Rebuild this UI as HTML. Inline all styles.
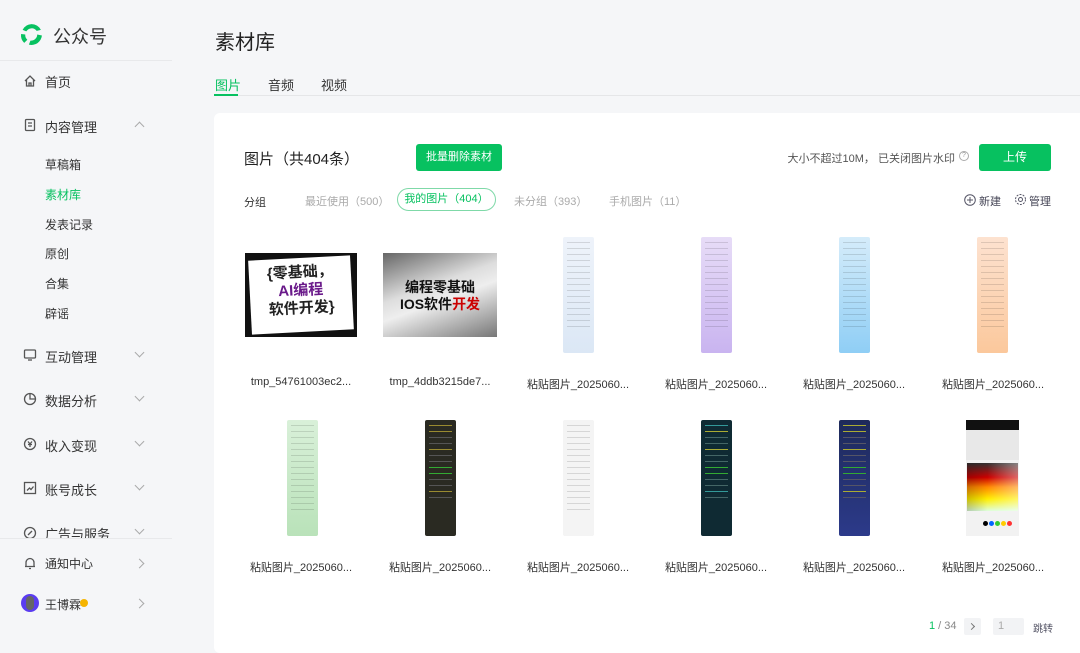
<!DOCTYPE html>
<html><head><meta charset="utf-8"><style>
*{margin:0;padding:0;box-sizing:border-box}
body{width:1080px;height:641px;overflow:hidden;background:#f5f6f8;font-family:"Liberation Sans","Noto Sans CJK SC",sans-serif;color:#333;position:relative}
.abs{position:absolute}
.nav{position:absolute;left:45px;font-size:13px;color:#333}
.sub{position:absolute;left:45px;font-size:12px;color:#333}
.ic{position:absolute;left:23px}
.chev{position:absolute;left:136px;width:7px;height:7px;border-right:1px solid #aaa;border-bottom:1px solid #aaa}
.card{position:absolute;left:214px;top:113px;width:880px;height:540px;background:#fff;border-radius:6px}
.cap{position:absolute;width:130px;text-align:center;font-size:11px;color:#333}
.tall{position:absolute;width:31px;height:116px;border-radius:2px;overflow:hidden}
.tall i{display:block;height:1px;margin:5px 4px 0;background:rgba(0,0,0,.12)}
</style></head><body>
<svg class="abs" style="left:19px;top:22px" width="25" height="25" viewBox="0 0 24 24"><path d="M12 2a10 10 0 0 1 9 5.5l-4 1A6 6 0 0 0 7 9L3.5 7.5A10 10 0 0 1 12 2z" fill="#07c160"/><path d="M22 13a10 10 0 0 1-12.5 8.7l1.5-3.8A6 6 0 0 0 17.5 12z" fill="#07c160"/><path d="M5 20a10 10 0 0 1-3-8.5l4 .5a6 6 0 0 0 2 5z" fill="#07c160"/></svg>
<div class="abs" style="left:53px;top:23px;font-size:18px;color:#333">公众号</div>
<div class="abs" style="left:0;top:60px;width:172px;height:1px;background:#e8e9eb"></div>
<svg class="ic" style="top:74px" width="14" height="14" viewBox="0 0 14 14" fill="none" stroke="#555" stroke-width="1.3"><path d="M2 7L7 2l5 5M3.5 6v6h7V6M6 12V9h2v3"/></svg>
<div class="nav" style="top:72px">首页</div>
<svg class="ic" style="top:118px" width="14" height="14" viewBox="0 0 14 14" fill="none" stroke="#555" stroke-width="1.3"><rect x="2.5" y="1.5" width="9" height="11" rx="1"/><path d="M5 5h4M5 8h4"/></svg>
<div class="nav" style="top:117px">内容管理</div>
<div class="chev" style="top:123px;transform:rotate(-135deg)"></div>
<div class="sub" style="top:156px">草稿箱</div>
<div class="sub" style="top:186px;color:#07c160">素材库</div>
<div class="sub" style="top:216px">发表记录</div>
<div class="sub" style="top:245px">原创</div>
<div class="sub" style="top:275px">合集</div>
<div class="sub" style="top:305px">辟谣</div>
<svg class="ic" style="top:348px" width="14" height="14" viewBox="0 0 14 14" fill="none" stroke="#555" stroke-width="1.3"><rect x="1.5" y="2" width="11" height="8" rx="1"/><path d="M5 12h4"/></svg>
<div class="nav" style="top:347px">互动管理</div><div class="chev" style="top:349px;transform:rotate(45deg)"></div>
<svg class="ic" style="top:392px" width="14" height="14" viewBox="0 0 14 14" fill="none" stroke="#555" stroke-width="1.3"><circle cx="7" cy="7" r="5.5"/><path d="M7 1.5V7h5.5"/></svg>
<div class="nav" style="top:391px">数据分析</div><div class="chev" style="top:393px;transform:rotate(45deg)"></div>
<svg class="ic" style="top:437px" width="14" height="14" viewBox="0 0 14 14" fill="none" stroke="#555" stroke-width="1.3"><circle cx="7" cy="7" r="5.5"/><path d="M5 4.5l2 2.5 2-2.5M7 7v3M5 7.5h4"/></svg>
<div class="nav" style="top:436px">收入变现</div><div class="chev" style="top:438px;transform:rotate(45deg)"></div>
<svg class="ic" style="top:481px" width="14" height="14" viewBox="0 0 14 14" fill="none" stroke="#555" stroke-width="1.3"><rect x="1.5" y="1.5" width="11" height="11"/><path d="M4 9.5l2.5-2.5 1.5 1.5 2.5-3"/></svg>
<div class="nav" style="top:480px">账号成长</div><div class="chev" style="top:482px;transform:rotate(45deg)"></div>
<svg class="ic" style="top:526px" width="14" height="14" viewBox="0 0 14 14" fill="none" stroke="#555" stroke-width="1.3"><circle cx="7" cy="7" r="5.5"/><path d="M5 9l4-4"/></svg>
<div class="nav" style="top:524px">广告与服务</div><div class="chev" style="top:526px;transform:rotate(45deg)"></div>
<div class="abs" style="left:0;top:538px;width:172px;height:103px;background:#f5f6f8;border-top:1px solid #e8e9eb"></div>
<svg class="ic" style="top:556px" width="14" height="14" viewBox="0 0 14 14" fill="none" stroke="#555" stroke-width="1.3"><path d="M3 10.5V6.5a4 4 0 0 1 8 0v4M2 10.5h10M6 12.5h2"/></svg>
<div class="sub" style="top:555px">通知中心</div>
<div class="chev" style="top:560px;left:136px;transform:rotate(-45deg)"></div>
<div class="abs" style="left:21px;top:594px;width:18px;height:18px;border-radius:50%;background:#5a3cf0"><div style="margin:2px 5px;width:8px;height:14px;border-radius:4px;background:#666"></div></div>
<div class="sub" style="top:596px">王博霖</div>
<div class="abs" style="left:80px;top:599px;width:8px;height:8px;border-radius:50%;background:#f5b400;margin-left:0"></div>
<div class="chev" style="top:600px;left:136px;transform:rotate(-45deg)"></div>

<div class="abs" style="left:215px;top:26px;font-size:20px;color:#222">素材库</div>
<div class="abs" style="left:215px;top:75px;font-size:13px;color:#07c160">图片</div>
<div class="abs" style="left:268px;top:75px;font-size:13px">音频</div>
<div class="abs" style="left:321px;top:75px;font-size:13px">视频</div>
<div class="abs" style="left:214px;top:95px;width:866px;height:1px;background:#e5e6e8"></div>
<div class="abs" style="left:214px;top:94px;width:24px;height:2px;background:#07c160"></div>

<div class="card"></div>
<div class="abs" style="left:244px;top:148px;font-size:15px;color:#222">图片（共404条）</div>
<div class="abs" style="left:416px;top:144px;width:86px;height:27px;background:#07c160;border-radius:3px;color:#fff;font-size:11px;text-align:center;line-height:27px">批量删除素材</div>
<div class="abs" style="right:125px;top:150px;font-size:11px;color:#555;white-space:nowrap">大小不超过10M， 已关闭图片水印</div>
<div class="abs" style="left:959px;top:151px;width:10px;height:10px;border:1px solid #aaa;border-radius:50%;font-size:7px;color:#999;text-align:center;line-height:8px">?</div>
<div class="abs" style="left:979px;top:144px;width:72px;height:27px;background:#07c160;border-radius:3px;color:#fff;font-size:12px;text-align:center;line-height:27px">上传</div>

<div class="abs" style="left:244px;top:194px;font-size:11px;color:#333">分组</div>
<div class="abs" style="left:305px;top:193px;font-size:11px;color:#aaa">最近使用（500）</div>
<div class="abs" style="left:397px;top:188px;width:99px;height:23px;border:1px solid #7fd9a8;border-radius:12px;font-size:11px;color:#07c160;text-align:center;line-height:21px">我的图片（404）</div>
<div class="abs" style="left:514px;top:193px;font-size:11px;color:#aaa">未分组（393）</div>
<div class="abs" style="left:609px;top:193px;font-size:11px;color:#aaa">手机图片（11）</div>
<svg class="abs" style="left:964px;top:194px" width="12" height="12" viewBox="0 0 12 12" fill="none" stroke="#556" stroke-width="1"><circle cx="6" cy="6" r="5.3"/><path d="M6 3v6M3 6h6"/></svg>
<div class="abs" style="left:979px;top:193px;font-size:11px;color:#445">新建</div>
<svg class="abs" style="left:1014px;top:193px" width="13" height="13" viewBox="0 0 13 13" fill="none" stroke="#556" stroke-width="1"><circle cx="6.5" cy="6.5" r="2"/><circle cx="6.5" cy="6.5" r="5" stroke-dasharray="2 1.2"/></svg>
<div class="abs" style="left:1029px;top:193px;font-size:11px;color:#445">管理</div>

<div class="abs" style="left:245px;top:253px;width:112px;height:84px;background:#111;padding:5px"><div style="background:#fff;height:100%;transform:rotate(-3deg);font-size:15px;line-height:18px;color:#222;text-align:center;padding-top:6px;font-weight:bold">{零基础，<br><span style="color:#6a1a8a">AI编程</span><br>软件开发}</div></div>
<div class="abs" style="left:383px;top:253px;width:114px;height:84px;background:linear-gradient(160deg,#666 0%,#ddd 40%,#eee 55%,#777 100%);font-size:14px;font-weight:bold;color:#111;text-align:center;padding-top:26px;line-height:17px">编程零基础<br>IOS软件<span style="color:#c00">开发</span></div>
<div class="tall" style="left:563px;top:237px;background:linear-gradient(#eef3fa,#dbe7f5)"><i></i><i></i><i></i><i></i><i></i><i></i><i></i><i></i><i></i><i></i><i></i><i></i><i></i><i></i><i></i></div>
<div class="tall" style="left:701px;top:237px;background:linear-gradient(#e7dcf7,#c9b4f0)"><i></i><i></i><i></i><i></i><i></i><i></i><i></i><i></i><i></i><i></i><i></i><i></i><i></i><i></i><i></i></div>
<div class="tall" style="left:839px;top:237px;background:linear-gradient(#d5ecfa,#8fcef5)"><i></i><i></i><i></i><i></i><i></i><i></i><i></i><i></i><i></i><i></i><i></i><i></i><i></i><i></i><i></i></div>
<div class="tall" style="left:977px;top:237px;background:linear-gradient(#fde2d0,#fbc89c)"><i></i><i></i><i></i><i></i><i></i><i></i><i></i><i></i><i></i><i></i><i></i><i></i><i></i><i></i><i></i></div>
<div class="cap" style="left:236px;top:376px">tmp_54761003ec2...</div>
<div class="cap" style="left:375px;top:376px">tmp_4ddb3215de7...</div>
<div class="cap" style="left:513px;top:376px">粘贴图片_2025060...</div>
<div class="cap" style="left:651px;top:376px">粘贴图片_2025060...</div>
<div class="cap" style="left:789px;top:376px">粘贴图片_2025060...</div>
<div class="cap" style="left:928px;top:376px">粘贴图片_2025060...</div>
<div class="tall" style="left:287px;top:420px;background:linear-gradient(#d9f0d9,#b9e2b9)"><i></i><i></i><i></i><i></i><i></i><i></i><i></i><i></i><i></i><i></i><i></i><i></i><i></i><i></i><i></i></div>
<div class="tall" style="left:425px;top:420px;background:#2a2a22"><i style="background:#998a30"></i><i style="background:#998a30"></i><i style="background:#555"></i><i style="background:#555"></i><i style="background:#998a30"></i><i style="background:#555"></i><i style="background:#555"></i><i style="background:#3a3"></i><i style="background:#3a3"></i><i style="background:#555"></i><i style="background:#555"></i><i style="background:#998a30"></i><i style="background:#555"></i></div>
<div class="tall" style="left:563px;top:420px;background:#f4f4f4"><i></i><i></i><i></i><i></i><i></i><i></i><i></i><i></i><i></i><i></i><i></i><i></i><i></i><i></i><i></i></div>
<div class="tall" style="left:701px;top:420px;background:#0f2a33"><i style="background:#399"></i><i style="background:#aa3"></i><i style="background:#466"></i><i style="background:#466"></i><i style="background:#aa3"></i><i style="background:#466"></i><i style="background:#466"></i><i style="background:#3a3"></i><i style="background:#3a3"></i><i style="background:#466"></i><i style="background:#466"></i><i style="background:#399"></i><i style="background:#466"></i></div>
<div class="tall" style="left:839px;top:420px;background:linear-gradient(#1e2a5a,#2c3a8a)"><i style="background:#aa3"></i><i style="background:#aa3"></i><i style="background:#556"></i><i style="background:#556"></i><i style="background:#aa3"></i><i style="background:#556"></i><i style="background:#556"></i><i style="background:#3a3"></i><i style="background:#3a3"></i><i style="background:#556"></i><i style="background:#556"></i><i style="background:#aa3"></i><i style="background:#556"></i></div>
<div class="abs" style="left:966px;top:420px;width:53px;height:116px;background:#f2f2f2;overflow:hidden">
<div style="height:10px;background:#111"></div>
<div style="height:30px;background:#e8e8e8"></div>
<div style="margin:3px 1px;height:48px;background:linear-gradient(90deg,rgba(0,0,0,.2),transparent 40%,rgba(255,255,255,.4)),linear-gradient(#333,#c00 30%,#f80 50%,#fe0 75%,#dfd)"></div>
<div style="margin:10px 0 0 17px;font-size:0"><span style="display:inline-block;width:5px;height:5px;border-radius:50%;background:#000;margin-right:1px"></span><span style="display:inline-block;width:5px;height:5px;border-radius:50%;background:#06f;margin-right:1px"></span><span style="display:inline-block;width:5px;height:5px;border-radius:50%;background:#3c3;margin-right:1px"></span><span style="display:inline-block;width:5px;height:5px;border-radius:50%;background:#fc0;margin-right:1px"></span><span style="display:inline-block;width:5px;height:5px;border-radius:50%;background:#f33"></span></div>
</div>
<div class="cap" style="left:236px;top:559px">粘贴图片_2025060...</div>
<div class="cap" style="left:375px;top:559px">粘贴图片_2025060...</div>
<div class="cap" style="left:513px;top:559px">粘贴图片_2025060...</div>
<div class="cap" style="left:651px;top:559px">粘贴图片_2025060...</div>
<div class="cap" style="left:789px;top:559px">粘贴图片_2025060...</div>
<div class="cap" style="left:928px;top:559px">粘贴图片_2025060...</div>

<div class="abs" style="left:929px;top:620px;font-size:11px;color:#888"><span style="color:#07c160">1</span> / 34</div>
<div class="abs" style="left:964px;top:618px;width:17px;height:17px;background:#f2f3f5;border-radius:2px"></div>
<div class="abs" style="left:969px;top:624px;width:5px;height:5px;border-right:1px solid #777;border-top:1px solid #777;transform:rotate(45deg)"></div>
<div class="abs" style="left:993px;top:618px;width:31px;height:17px;background:#f2f3f5;border-radius:2px;font-size:11px;color:#aaa;padding-left:5px;line-height:17px">1</div>
<div class="abs" style="left:1033px;top:620px;font-size:10px;color:#556">跳转</div>
</body></html>
